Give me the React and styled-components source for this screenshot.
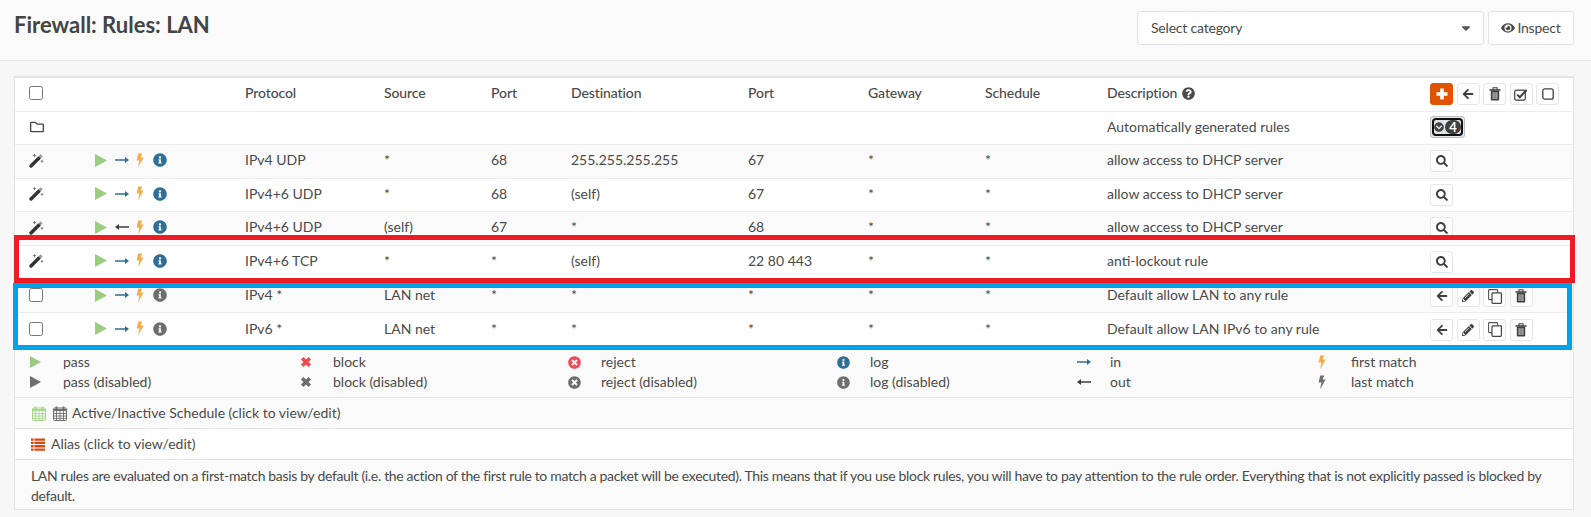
import React from "react";
import styled, { createGlobalStyle } from "styled-components";
import {
  FaInfoCircle, FaSearch, FaArrowLeft, FaPencilAlt, FaRegFolder, FaQuestionCircle,
  FaChevronCircleDown, FaTimesCircle, FaEye, FaCaretDown,
} from "react-icons/fa";

const Global = createGlobalStyle`
  html, body { margin: 0; padding: 0; background: #f7f7f7; }
  body { font-family: "Lato", "Noto Sans", sans-serif; font-size: 14px; color: #4a4a4a; line-height: 20px; }
  * { box-sizing: border-box; }
`;

const Page = styled.div`width: 1591px; height: 517px; position: relative; overflow: hidden;`;
const TopBar = styled.header`
  height: 61px; background: #fafafa; border-bottom: 1px solid #e7e7e7;
  display: flex; align-items: flex-start; justify-content: space-between;
  padding: 11px 17px 0 14px;
`;
const Title = styled.h1`margin: 2px 0 0; font-size: 22px; line-height: 24px; font-weight: 700; color: #444;`;
const TopTools = styled.div`display: flex; gap: 4px;`;
const SelectBox = styled.div`
  width: 347px; height: 34px; background: #fff; border: 1px solid #e4e4e4; border-radius: 3px;
  display: flex; align-items: center; justify-content: space-between; padding: 0 10px 0 13px;
  letter-spacing: -0.2px;
  svg { color: #555; font-size: 14px; }
`;
const InspectButton = styled.div`
  width: 86px; height: 34px; background: #fff; border: 1px solid #e4e4e4; border-radius: 3px;
  display: flex; align-items: center; justify-content: center; gap: 2px; letter-spacing: -0.2px;
`;
const Panel = styled.section`
  margin: 15px 17px 0 14px; height: 434px; background: #fff;
  border: 1px solid #e4e4e4; border-top: 2px solid #e4e4e4;
`;
const Row = styled.div`
  display: grid; height: 33.5px;
  grid-template-columns: 65px 150px 139px 107px 80px 177px 120px 117px 122px 323px 1fr;
  padding: 0 0 ${p => (p.$up ? 2 : 0)}px 15px; align-items: center;
  background: ${p => (p.$alt ? "#fafafa" : "#fff")};
  border-bottom: 1px solid #ececec;
`;
const Head = styled.span`font-weight: 500; color: #4a4a4a; letter-spacing: -0.1px; white-space: nowrap;`;
const HelpIcon = styled(FaQuestionCircle)`font-size: 13px; vertical-align: -1.5px; margin-left: 1px;`;
const Cell = styled.span`white-space: nowrap;`;
const Check = styled.span`
  display: block; width: 14px; height: 14px; margin-left: -1px;
  border: 1px solid #767676; border-radius: 2.5px; background: #fff;
`;
const WandSlot = styled.span`display: block; margin-left: -1px;`;
const Status = styled.span`display: flex; align-items: center; height: 15px;`;
const StatusGap = styled.span`display: inline-block; width: ${p => p.$w}px;`;
const Tools = styled.div`display: flex; gap: 3.5px; margin-top: 2px;`;
const Btn = styled.span`
  width: 23px; height: 22px; background: ${p => (p.$primary ? "#e05400" : "#fff")};
  border: 1px solid ${p => (p.$primary ? "#e05400" : "#e6e6e6")}; border-radius: 3px;
  display: flex; align-items: center; justify-content: center;
  color: ${p => (p.$primary ? "#fff" : "#3f3f3f")}; font-size: 12px;
`;
const Toggle = styled.span`
  width: 35px; height: 22px; background: #e8e8e8; border: 1px solid #bdbdbd; border-radius: 3px;
  padding: 1px; display: flex;
`;
const ToggleInner = styled.span`
  flex: 1; min-width: 0; border: 2px solid #111; border-radius: 4px; background: #dfe3ea;
  display: flex; align-items: center; justify-content: space-between; padding: 0;
  color: #444; font-size: 10px;
`;
const Badge = styled.span`
  width: 16px; height: 14px; border-radius: 7px; background: #3f3f3f; color: #fff;
  font-size: 13px; font-weight: 700; line-height: 14px; text-align: center;
`;
const Legend = styled.div`
  height: 52px; padding: 6px 0 0 15px; background: #fafafa; border-bottom: 1px solid #e4e4e4;
  display: grid; grid-template-columns: 270px 268px 269px 240px 241px 1fr; grid-auto-rows: 20px;
`;
const LegendItem = styled.div`display: grid; grid-template-columns: 33px 1fr; align-items: center;`;
const Foot = styled.div`
  height: ${p => p.$h}px; padding: 0 16px; background: ${p => (p.$alt ? "#fafafa" : "#fff")};
  border-bottom: 1px solid #e4e4e4;
  display: flex; align-items: center; gap: ${p => p.$gap}px;
`;
const CalendarPair = styled.span`display: flex; gap: 7px; margin-left: 1px;`;
const Note = styled.div`
  height: 49px; padding: 6px 16px 0; background: #fafafa; letter-spacing: -0.33px;
`;
const Overlay = styled.div`
  position: absolute; pointer-events: none;
  left: ${p => p.$l}px; top: ${p => p.$t}px; width: ${p => p.$w}px; height: ${p => p.$h}px;
  border: 5px solid ${p => p.$c};
`;

const Svg = ({ w, h, children, vb }) => (
  <svg width={w} height={h} viewBox={vb || `0 0 ${w} ${h}`} style={{ display: "block" }}>{children}</svg>
);
const Bolt = ({ c }) => (
  <Svg w={8} h={15}>
    <path d="M2.2 0.5H6.2L4.6 4.6H7.6L2 14.5L3.4 7.6H0.6Z" fill={c} />
  </Svg>
);
const Play = ({ c, w = 12, h = 13 }) => (
  <Svg w={w} h={h} vb="0 0 12 13"><path d="M0 0L12 6.5L0 13Z" fill={c} /></Svg>
);
const Arrow = ({ c, left }) => (
  <Svg w={14} h={8}>
    <path
      d={left ? "M14 3.2H4V1L0 4L4 7V4.8H14Z" : "M0 3.2H10V1L14 4L10 7V4.8H0Z"}
      fill={c}
    />
  </Svg>
);
const Wand = () => (
  <Svg w={15} h={15}>
    <path d="M2 13L10 5" stroke="#333" strokeWidth="3.4" strokeLinecap="round" />
    <path d="M10.5 4.5L12.6 2.4" stroke="#999" strokeWidth="3" />
    <path d="M5.5 1V4.2M3.9 2.6H7.1M13 7V9.6M11.7 8.3H14.3" stroke="#777" strokeWidth="0.9" />
  </Svg>
);
const Trash = () => (
  <Svg w={12} h={14}>
    <path d="M4 2.4V0.8H8V2.4" stroke="#3f3f3f" strokeWidth="1.1" fill="none" />
    <rect x="0.5" y="2.2" width="11" height="1.5" fill="#3f3f3f" />
    <path d="M1.8 3.5H10.2V12.5A1 1 0 0 1 9.2 13.5H2.8A1 1 0 0 1 1.8 12.5Z" fill="#3f3f3f" />
    <path d="M4.1 5.2V12M6 5.2V12M7.9 5.2V12" stroke="#fff" strokeWidth="0.8" />
  </Svg>
);
const CheckSquare = () => (
  <Svg w={14} h={13}>
    <rect x="0.7" y="2.2" width="10.6" height="10" rx="1.6" fill="none" stroke="#3f3f3f" strokeWidth="1.2" />
    <path d="M3.2 6.6L5.8 9.2L12.6 2" fill="none" stroke="#3f3f3f" strokeWidth="2" />
  </Svg>
);
const SquareOutline = () => (
  <Svg w={12} h={12}>
    <rect x="0.8" y="0.8" width="10.4" height="10.4" rx="2" fill="none" stroke="#3f3f3f" strokeWidth="1.3" />
  </Svg>
);
const Copy = () => (
  <Svg w={14} h={15}>
    <rect x="0.6" y="0.6" width="9" height="10" rx="0.8" fill="#fff" stroke="#555" strokeWidth="1.1" />
    <rect x="4" y="3.8" width="9.4" height="10.6" rx="0.8" fill="#fff" stroke="#444" strokeWidth="1.2" />
  </Svg>
);
const Plus = () => (
  <Svg w={12} h={12}>
    <path d="M4.2 0.5H7.8V4.2H11.5V7.8H7.8V11.5H4.2V7.8H0.5V4.2H4.2Z" fill="#fff" />
  </Svg>
);
const Cross = ({ c }) => (
  <Svg w={12} h={12}>
    <path d="M2.2 2.2L9.8 9.8M9.8 2.2L2.2 9.8" stroke={c} strokeWidth="3.6" />
  </Svg>
);
const Calendar = ({ c }) => (
  <Svg w={14} h={15}>
    <rect x="0.5" y="2" width="13" height="12.5" rx="1" fill="none" stroke={c} />
    <path d="M0.5 3H13.5V5H0.5Z" fill={c} />
    <path d="M0.5 7.5H13.5M0.5 10H13.5M0.5 12.4H13.5M3.5 5V14M7 5V14M10.5 5V14" stroke={c} strokeWidth="0.9" />
    <path d="M3.5 0.5V3M10.5 0.5V3" stroke={c} strokeWidth="1.8" />
  </Svg>
);
const AliasList = () => (
  <Svg w={14} h={13}>
    <path
      d="M0 0.5H2.6V2.8H0ZM3.4 0.5H14V2.8H3.4ZM0 3.8H2.6V6.1H0ZM3.4 3.8H14V6.1H3.4ZM0 7.1H2.6V9.4H0ZM3.4 7.1H14V9.4H3.4ZM0 10.4H2.6V12.7H0ZM3.4 10.4H14V12.7H3.4Z"
      fill="#d9480f"
    />
  </Svg>
);

const rules = [
  ["IPv4 UDP", "*", "68", "255.255.255.255", "67", "allow access to DHCP server", "in"],
  ["IPv4+6 UDP", "*", "68", "(self)", "67", "allow access to DHCP server", "in"],
  ["IPv4+6 UDP", "(self)", "67", "*", "68", "allow access to DHCP server", "out"],
  ["IPv4+6 TCP", "*", "*", "(self)", "22 80 443", "anti-lockout rule", "in"],
];
const userRules = [
  ["IPv4 *", "Default allow LAN to any rule"],
  ["IPv6 *", "Default allow LAN IPv6 to any rule"],
];

const StatusIcons = ({ dir, info }) => (
  <Status>
    <Play c="#9ccc80" />
    <StatusGap $w={8} />
    {dir === "in" ? <Arrow c="#2f6f96" /> : <Arrow c="#3f3f3f" left />}
    <StatusGap $w={7} />
    <Bolt c="#f0ad4e" />
    <StatusGap $w={9} />
    <FaInfoCircle size={14} color={info} />
  </Status>
);

export default function App() {
  return (
    <Page>
      <Global />
      <TopBar>
        <Title>Firewall: Rules: LAN</Title>
        <TopTools>
          <SelectBox>Select category<FaCaretDown /></SelectBox>
          <InspectButton><FaEye size={14} />Inspect</InspectButton>
        </TopTools>
      </TopBar>
      <Panel>
        <Row $up>
          <Check /><span />
          <Head>Protocol</Head><Head>Source</Head><Head>Port</Head><Head>Destination</Head>
          <Head>Port</Head><Head>Gateway</Head><Head>Schedule</Head>
          <Head>Description <HelpIcon /></Head>
          <Tools>
            <Btn $primary><Plus /></Btn><Btn><FaArrowLeft /></Btn><Btn><Trash /></Btn>
            <Btn><CheckSquare /></Btn><Btn><SquareOutline /></Btn>
          </Tools>
        </Row>
        <Row $up>
          <FaRegFolder size={14} color="#444" />
          <span /><span /><span /><span /><span /><span /><span /><span />
          <Cell>Automatically generated rules</Cell>
          <Toggle><ToggleInner><FaChevronCircleDown /><Badge>4</Badge></ToggleInner></Toggle>
        </Row>
        {rules.map((r, i) => (
          <Row key={i} $alt={i % 2 === 0} $up>
            <WandSlot><Wand /></WandSlot>
            <StatusIcons dir={r[6]} info="#2f6f96" />
            <Cell>{r[0]}</Cell><Cell>{r[1]}</Cell><Cell>{r[2]}</Cell><Cell>{r[3]}</Cell><Cell>{r[4]}</Cell>
            <Cell>*</Cell><Cell>*</Cell><Cell>{r[5]}</Cell>
            <Tools><Btn><FaSearch /></Btn></Tools>
          </Row>
        ))}
        {userRules.map((r, i) => (
          <Row key={i} $alt={i === 0}>
            <Check />
            <StatusIcons dir="in" info="#6e6e6e" />
            <Cell>{r[0]}</Cell><Cell>LAN net</Cell><Cell>*</Cell><Cell>*</Cell><Cell>*</Cell>
            <Cell>*</Cell><Cell>*</Cell><Cell>{r[1]}</Cell>
            <Tools>
              <Btn><FaArrowLeft /></Btn><Btn><FaPencilAlt /></Btn>
              <Btn><Copy /></Btn><Btn><Trash /></Btn>
            </Tools>
          </Row>
        ))}
        <Legend>
          <LegendItem><Play c="#9ccc80" w={11} h={12} /><span>pass</span></LegendItem>
          <LegendItem><Cross c="#ef4b55" /><span>block</span></LegendItem>
          <LegendItem><FaTimesCircle size={13} color="#ef4b55" /><span>reject</span></LegendItem>
          <LegendItem><FaInfoCircle size={13} color="#2f6f96" /><span>log</span></LegendItem>
          <LegendItem><Arrow c="#2f6f96" /><span>in</span></LegendItem>
          <LegendItem><Bolt c="#f0ad4e" /><span>first match</span></LegendItem>
          <LegendItem><Play c="#6e6e6e" w={11} h={12} /><span>pass (disabled)</span></LegendItem>
          <LegendItem><Cross c="#6e6e6e" /><span>block (disabled)</span></LegendItem>
          <LegendItem><FaTimesCircle size={13} color="#6e6e6e" /><span>reject (disabled)</span></LegendItem>
          <LegendItem><FaInfoCircle size={13} color="#6e6e6e" /><span>log (disabled)</span></LegendItem>
          <LegendItem><Arrow c="#3f3f3f" left /><span>out</span></LegendItem>
          <LegendItem><Bolt c="#6e6e6e" /><span>last match</span></LegendItem>
        </Legend>
        <Foot $h={31} $alt $gap={5}>
          <CalendarPair><Calendar c="#a9d68c" /><Calendar c="#6e6e6e" /></CalendarPair>
          <span>Active/Inactive Schedule (click to view/edit)</span>
        </Foot>
        <Foot $h={31} $gap={6}>
          <AliasList />
          <span>Alias (click to view/edit)</span>
        </Foot>
        <Note>
          LAN rules are evaluated on a first-match basis by default (i.e. the action of the first rule to match a packet will be executed). This means that if you use block rules, you will have to pay attention to the rule order. Everything that is not explicitly passed is blocked by default.
        </Note>
      </Panel>
      <Overlay $l={14} $t={235} $w={1561} $h={48} $c="#ed1c24" />
      <Overlay $l={13} $t={283} $w={1559} $h={67} $c="#00a2e8" />
    </Page>
  );
}
